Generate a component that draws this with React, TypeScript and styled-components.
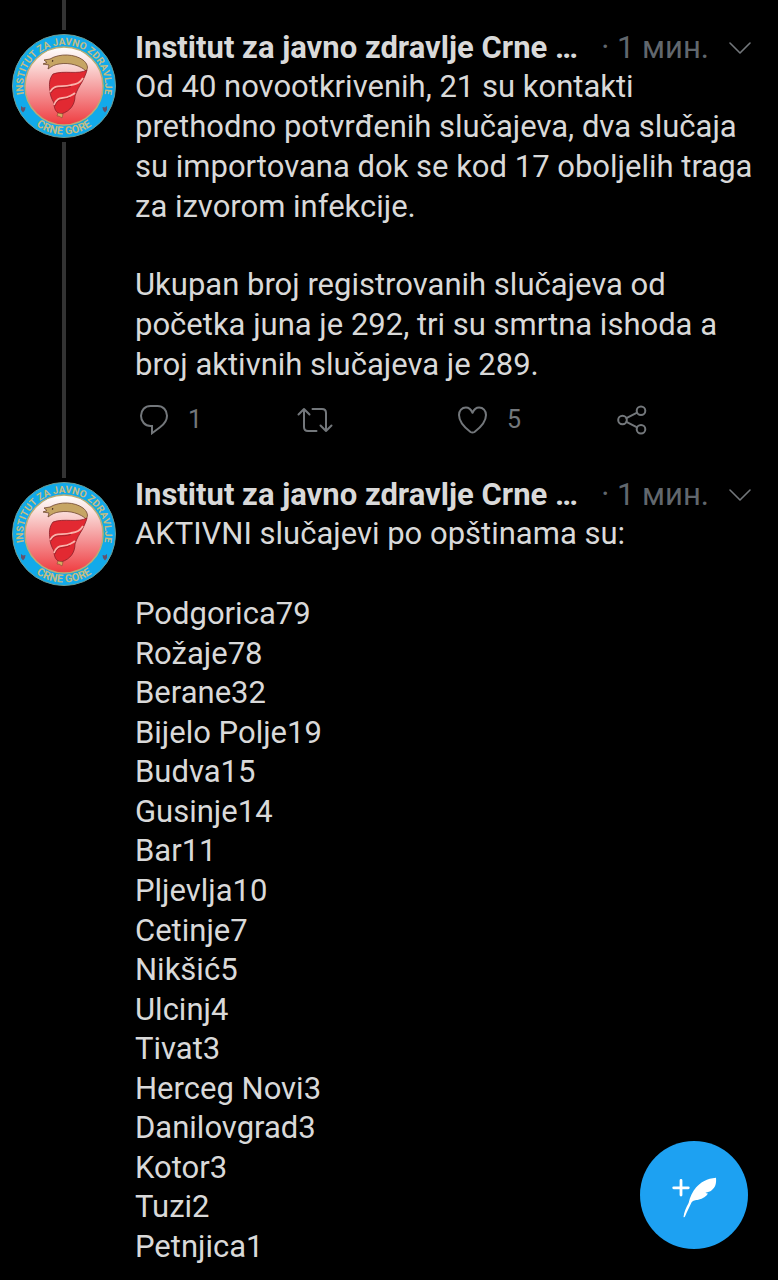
import React from 'react';
import styled, { createGlobalStyle } from 'styled-components';

const GlobalStyle = createGlobalStyle`
  * { box-sizing: border-box; }
  body {
    margin: 0;
    background: #000;
    color: #d9d9d9;
    font-family: Roboto, "Noto Sans", sans-serif;
  }
`;

const Timeline = styled.main`
  display: flex;
  flex-direction: column;
  min-height: 100vh;
`;

const Tweet = styled.article<{ $grow?: boolean }>`
  display: grid;
  grid-template-columns: 104px minmax(0, 1fr);
  column-gap: 19px;
  flex: ${(p) => (p.$grow ? '1 0 auto' : 'none')};
  padding: 0 0 0 12px;
`;

const Rail = styled.div`
  display: flex;
  flex-direction: column;
  align-items: center;
  gap: 4px;
`;

const ThreadLine = styled.span<{ $height?: number }>`
  width: 4px;
  background: #333;
  flex: ${(p) => (p.$height === undefined ? '1' : `0 0 ${p.$height}px`)};
`;

const AvatarLink = styled.a`
  display: block;
  width: 104px;
  height: 104px;
  border-radius: 50%;

  svg { display: block; }
`;

const Content = styled.div<{ $top: number }>`
  display: flex;
  flex-direction: column;
  padding-top: ${(p) => p.$top}px;
`;

const Header = styled.header`
  display: flex;
  align-items: center;
  height: 39px;
  padding-right: 27px;
  font-size: 31px;
  line-height: 39px;
  white-space: nowrap;
`;

const Author = styled.h2`
  flex: 1;
  margin: 0;
  overflow: hidden;
  font-size: 31px;
  font-weight: 700;
`;

const Time = styled.time`
  margin-right: 20px;
  color: #61676d;
`;

const IconButton = styled.button`
  display: flex;
  align-items: center;
  gap: 20px;
  padding: 0;
  border: 0;
  background: none;
  color: #73777b;
  font: 25px/32px Roboto, sans-serif;
  cursor: pointer;
`;

const Text = styled.p<{ $gap?: number }>`
  margin: 0;
  padding: 0 22px ${(p) => p.$gap ?? 0}px 0;
  font-size: 31px;
  line-height: 40px;
`;

const Actions = styled.div`
  display: grid;
  grid-template-columns: repeat(4, 1fr);
  padding: 19px 2px 39px 5px;
`;

const Towns = styled.ul`
  display: flex;
  flex: 1;
  flex-direction: column;
  justify-content: space-between;
  margin: 0;
  padding: 0 0 14px;
  list-style: none;
  font-size: 31px;
  line-height: 39px;
`;

const ComposeButton = styled.button`
  position: fixed;
  right: 30px;
  bottom: 31px;
  width: 108px;
  height: 108px;
  padding: 0;
  border: 0;
  border-radius: 50%;
  background: #1da1f2;
  color: #fff;
  cursor: pointer;

  svg { display: block; }
`;

const SealText = styled.text<{ $size: number }>`
  fill: #c3bd84;
  font-family: Roboto, "Liberation Sans", sans-serif;
  font-size: ${(p) => p.$size}px;
  font-weight: 700;
`;

function Seal({ id }: { id: string }) {
  return (
    <svg width="104" height="104" viewBox="0 0 104 104" role="img" aria-label="Institut za javno zdravlje Crne Gore">
      <defs>
        <linearGradient id={`${id}-glow`} x1="0" y1="0" x2="0" y2="1">
          <stop offset="0" stopColor="#fff" />
          <stop offset="0.18" stopColor="#fbe4e1" />
          <stop offset="0.6" stopColor="#f48e90" />
          <stop offset="1" stopColor="#ef3c40" />
        </linearGradient>
        <path id={`${id}-top`} d="M12 61 A41 41 0 1 1 92 61" />
        <path id={`${id}-bottom`} d="M7 70 A48.500 48.500 0 0 0 97 70" />
      </defs>
      <circle cx="52" cy="52" r="51.500" fill="#12aaea" stroke="#6f9d94" />
      <circle cx="52" cy="52" r="39" fill={`url(#${id}-glow)`} stroke="#b9ad76" strokeWidth="1.5" />
      <SealText $size={10} textAnchor="middle">
        <textPath href={`#${id}-top`} startOffset="50%">INSTITUT ZA JAVNO ZDRAVLJE</textPath>
      </SealText>
      <SealText $size={11} textAnchor="middle">
        <textPath href={`#${id}-bottom`} startOffset="50%">CRNE GORE</textPath>
      </SealText>
      <path d="M9 72 l2 1.5 2.5 -.5 -.5 3 -2 2.5 -2 -2.5z M95 72 l-2 1.5 -2.5 -.5 .5 3 2 2.5 2 -2.5z" fill="#64516c" />
      <path
        d="M32 26 L38 25 C48 19 63 20 71 26 C75 29 77 34 74 37 C69 32 58 28 47 30 C43 30.5 40 32 36 35 L37 31 L31 30 L35 28.5 Z"
        fill="#c6a564" stroke="#6f4630" strokeWidth="0.8" strokeLinejoin="round"
      />
      <path d="M40 26.8 l1.2 .3" stroke="#3c241b" strokeWidth="1.4" />
      <path
        d="M75 36 C74 40 72 44 70 48 C67 53 65 56 63 62 C63 70 59 77 49 80 C44 79 42 75 42 69 C39 64 38 60 38 57 C37 51 37 45 41 40 C52 36 66 41 75 36 Z"
        fill="#e22932" stroke="#8c2028" strokeWidth="0.8"
      />
      <path
        d="M38 58 C43 49 50 54 59 51 C65 50 68 49 71 44 M42 71 C46 61 50 66 58 62 C60 61 62 60 63 59"
        fill="none" stroke="#f9b3ab" strokeWidth="1.8"
      />
      <path
        d="M39 59 C43 51 50 55.500 59 52.500 M43 72 C46 63 50 67.500 58 63.500"
        fill="none" stroke="#8c2028" strokeWidth="0.7"
      />
      <path d="M46 79 L51 80 L50 84 L47 82 L45 82 Z" fill="#d6ad62" stroke="#8a4a34" strokeWidth="0.6" />
    </svg>
  );
}

const stroke = {
  fill: 'none',
  stroke: 'currentColor',
  strokeWidth: 2,
  strokeLinecap: 'round' as const,
  strokeLinejoin: 'round' as const,
  'aria-hidden': true,
};

const ReplyIcon = () => (
  <svg width="28" height="30" viewBox="0 0 28 30" {...stroke}>
    <path d="M10.500 1 H17.500 C23 1 27 5.200 27 10.800 C27 16 24.500 19 20 22.300 L12 28.200 V21 H10.500 C5 21 1 16.500 1 10.800 C1 5.200 5 1 10.500 1 Z" strokeLinejoin="miter" />
  </svg>
);

const RetweetIcon = () => (
  <svg width="35" height="26" viewBox="2 0 35 26" overflow="visible" {...stroke}>
    <path d="M1.500 7.500 L7 2 L12.500 7.500 M7 2 V20 C7 23 8.500 24 11 24 H19.500 M15.500 2 H25 C27.500 2 29 3.500 29 6 V24 M23.500 18.500 L29 24 L34.500 18.500" />
  </svg>
);

const HeartIcon = () => (
  <svg width="29" height="28" viewBox="0 0 29 28" {...stroke}>
    <path d="M14.500 6.800 C13 3.300 10.800 1.500 7.900 1.500 C3.900 1.500 1 4.700 1 9 C1 15.500 6.500 21.500 12.500 26 Q14.500 27.200 16.500 26 C22.500 21.500 28 15.500 28 9 C28 4.700 25.100 1.500 21.100 1.500 C18.200 1.500 16 3.300 14.500 6.800 Z" />
  </svg>
);

const ShareIcon = () => (
  <svg width="30" height="30" viewBox="0 0 30 30" {...stroke}>
    <circle cx="5.500" cy="15" r="4.300" />
    <circle cx="24" cy="5.800" r="4.300" />
    <circle cx="24" cy="24.200" r="4.300" />
    <path d="M9.400 13.100 L20.100 7.700 M9.400 16.900 L20.100 22.300" />
  </svg>
);

const ChevronIcon = () => (
  <svg width="22" height="12" viewBox="0 0 22 12" {...stroke} strokeWidth={1.6}>
    <path d="M1 1 L11 11 L21 1" />
  </svg>
);

const ComposeIcon = () => (
  <svg width="108" height="108" viewBox="0 0 108 108" aria-hidden="true">
    <path d="M41 39.500 V54 M33.700 46.800 H48.300" stroke="currentColor" strokeWidth="2.800" strokeLinecap="round" />
    <path
      d="M43.500 76 C44 71 46 67 48.600 62 C50 56 52.500 50.500 56 46.500 C60.500 41.500 67 37.500 76 36.800 C76.500 42 75.500 46.500 71.700 49.300 C70 50.700 68 51.200 65.500 51.800 C66.200 52.300 67 52.500 68 52.400 C66.500 55.500 63 57.500 58.300 58.700 C55.500 59.300 53 59 51.500 61.500 C49 66.500 47 71 45 75.500 Q44.300 76.800 43.500 76 Z"
      fill="currentColor"
    />
  </svg>
);

function TweetHeader() {
  return (
    <Header>
      <Author>Institut za javno zdravlje Crne …</Author>
      <Time>· 1 мин.</Time>
      <IconButton type="button" aria-label="Još">
        <ChevronIcon />
      </IconButton>
    </Header>
  );
}

const towns: [string, number][] = [
  ['Podgorica', 79],
  ['Rožaje', 78],
  ['Berane', 32],
  ['Bijelo Polje', 19],
  ['Budva', 15],
  ['Gusinje', 14],
  ['Bar', 11],
  ['Pljevlja', 10],
  ['Cetinje', 7],
  ['Nikšić', 5],
  ['Ulcinj', 4],
  ['Tivat', 3],
  ['Herceg Novi', 3],
  ['Danilovgrad', 3],
  ['Kotor', 3],
  ['Tuzi', 2],
  ['Petnjica', 1],
];

export default function App() {
  return (
    <>
      <GlobalStyle />
      <Timeline>
        <Tweet>
          <Rail>
            <ThreadLine $height={30} />
            <AvatarLink href="#profile">
              <Seal id="seal-first" />
            </AvatarLink>
            <ThreadLine />
          </Rail>
          <Content $top={28}>
            <TweetHeader />
            <Text $gap={38}>
              Od 40 novootkrivenih, 21 su kontakti prethodno potvrđenih slučajeva, dva slučaja su
              importovana dok se kod 17 oboljelih traga za izvorom infekcije.
            </Text>
            <Text>
              Ukupan broj registrovanih slučajeva od početka juna je 292, tri su smrtna ishoda a
              broj aktivnih slučajeva je 289.
            </Text>
            <Actions>
              <IconButton type="button" aria-label="Odgovori, 1">
                <ReplyIcon />1
              </IconButton>
              <IconButton type="button" aria-label="Retvituj">
                <RetweetIcon />
              </IconButton>
              <IconButton type="button" aria-label="Sviđa mi se, 5">
                <HeartIcon />5
              </IconButton>
              <IconButton type="button" aria-label="Podijeli">
                <ShareIcon />
              </IconButton>
            </Actions>
          </Content>
        </Tweet>
        <Tweet $grow>
          <Rail>
            <ThreadLine $height={3} />
            <AvatarLink href="#profile">
              <Seal id="seal-second" />
            </AvatarLink>
          </Rail>
          <Content $top={0}>
            <TweetHeader />
            <Text $gap={40}>AKTIVNI slučajevi po opštinama su:</Text>
            <Towns>
              {towns.map(([name, count]) => (
                <li key={name}>
                  {name}
                  {count}
                </li>
              ))}
            </Towns>
          </Content>
        </Tweet>
      </Timeline>
      <ComposeButton type="button" aria-label="Novi tvit">
        <ComposeIcon />
      </ComposeButton>
    </>
  );
}
